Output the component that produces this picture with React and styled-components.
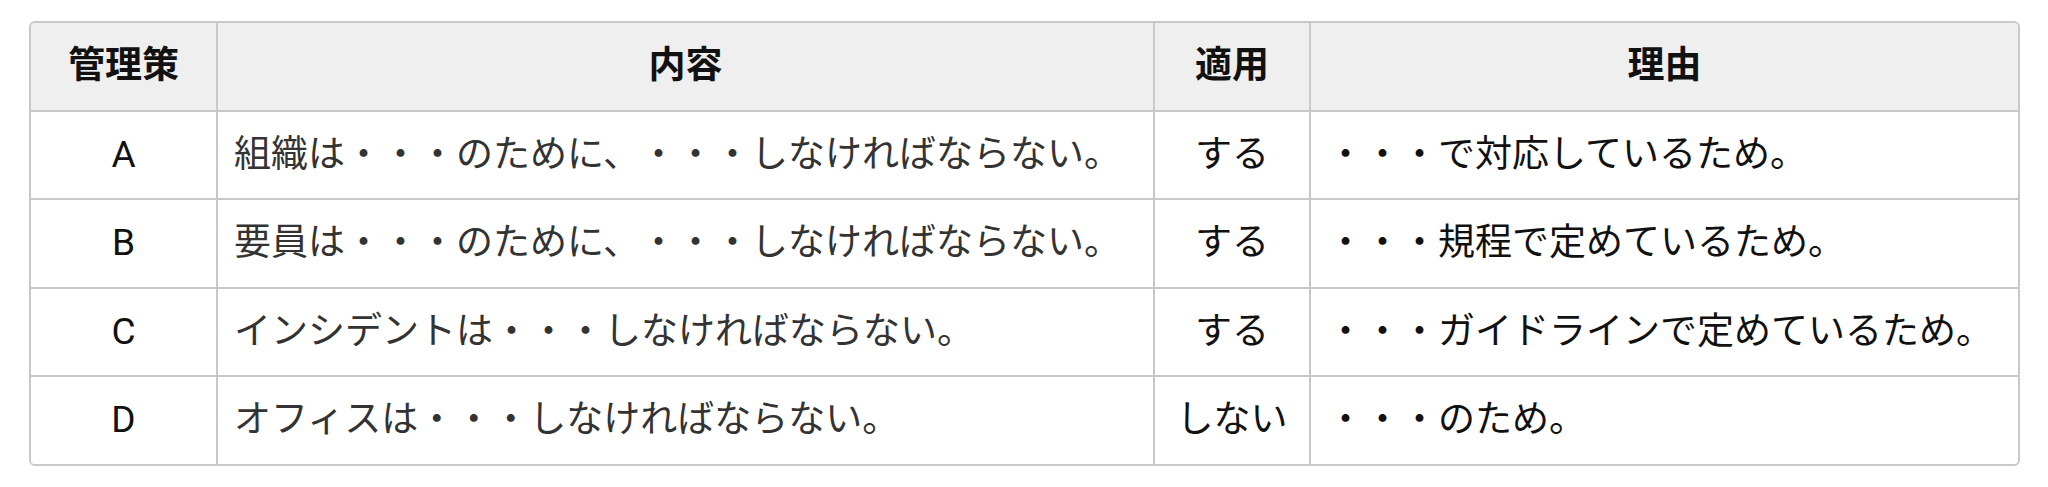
import React from "react";
import styled, { createGlobalStyle } from "styled-components";

const Global = createGlobalStyle`
  html, body { margin: 0; padding: 0; background: #ffffff; }
  body { font-family: Roboto, "Noto Sans CJK JP", sans-serif; }
`;

const Frame = styled.div`
  margin: 21px 28px 0 29px;
  border: 2px solid #c8c8c8;
  border-radius: 6px;
  overflow: hidden;
  display: grid;
  grid-template-columns: 187px 937px 156px 1fr;
`;

const Cell = styled.div`
  box-sizing: border-box;
  padding: 16px 16px;
  font-size: 37px;
  line-height: 54.6px;
  white-space: nowrap;
  text-spacing-trim: space-all;
  text-align: ${(p) => p.$align || "left"};
  color: ${(p) => (p.$muted ? "#333333" : "#111111")};
  background: ${(p) => (p.$head ? "#efefef" : "#ffffff")};
  font-weight: ${(p) => (p.$head ? 700 : 400)};
  border-right: ${(p) => (p.$last ? "none" : "2px solid #c8c8c8")};
  border-bottom: ${(p) => (p.$bottom ? "none" : "2px solid #c8c8c8")};
`;

const headers = ["管理策", "内容", "適用", "理由"];
const rows = [
  ["A", "組織は・・・のために、・・・しなければならない。", "する", "・・・で対応しているため。"],
  ["B", "要員は・・・のために、・・・しなければならない。", "する", "・・・規程で定めているため。"],
  ["C", "インシデントは・・・しなければならない。", "する", "・・・ガイドラインで定めているため。"],
  ["D", "オフィスは・・・しなければならない。", "しない", "・・・のため。"],
];
const aligns = ["center", "left", "center", "left"];

export default function App() {
  return (
    <>
      <Global />
      <Frame>
        {headers.map((h, i) => (
          <Cell key={h} $head $align="center" $last={i === 3}>
            {h}
          </Cell>
        ))}
        {rows.map((r, ri) =>
          r.map((c, ci) => (
            <Cell
              key={ri + "-" + ci}
              $align={aligns[ci]}
              $muted={ci === 1}
              $last={ci === 3}
              $bottom={ri === rows.length - 1}
            >
              {c}
            </Cell>
          ))
        )}
      </Frame>
    </>
  );
}
